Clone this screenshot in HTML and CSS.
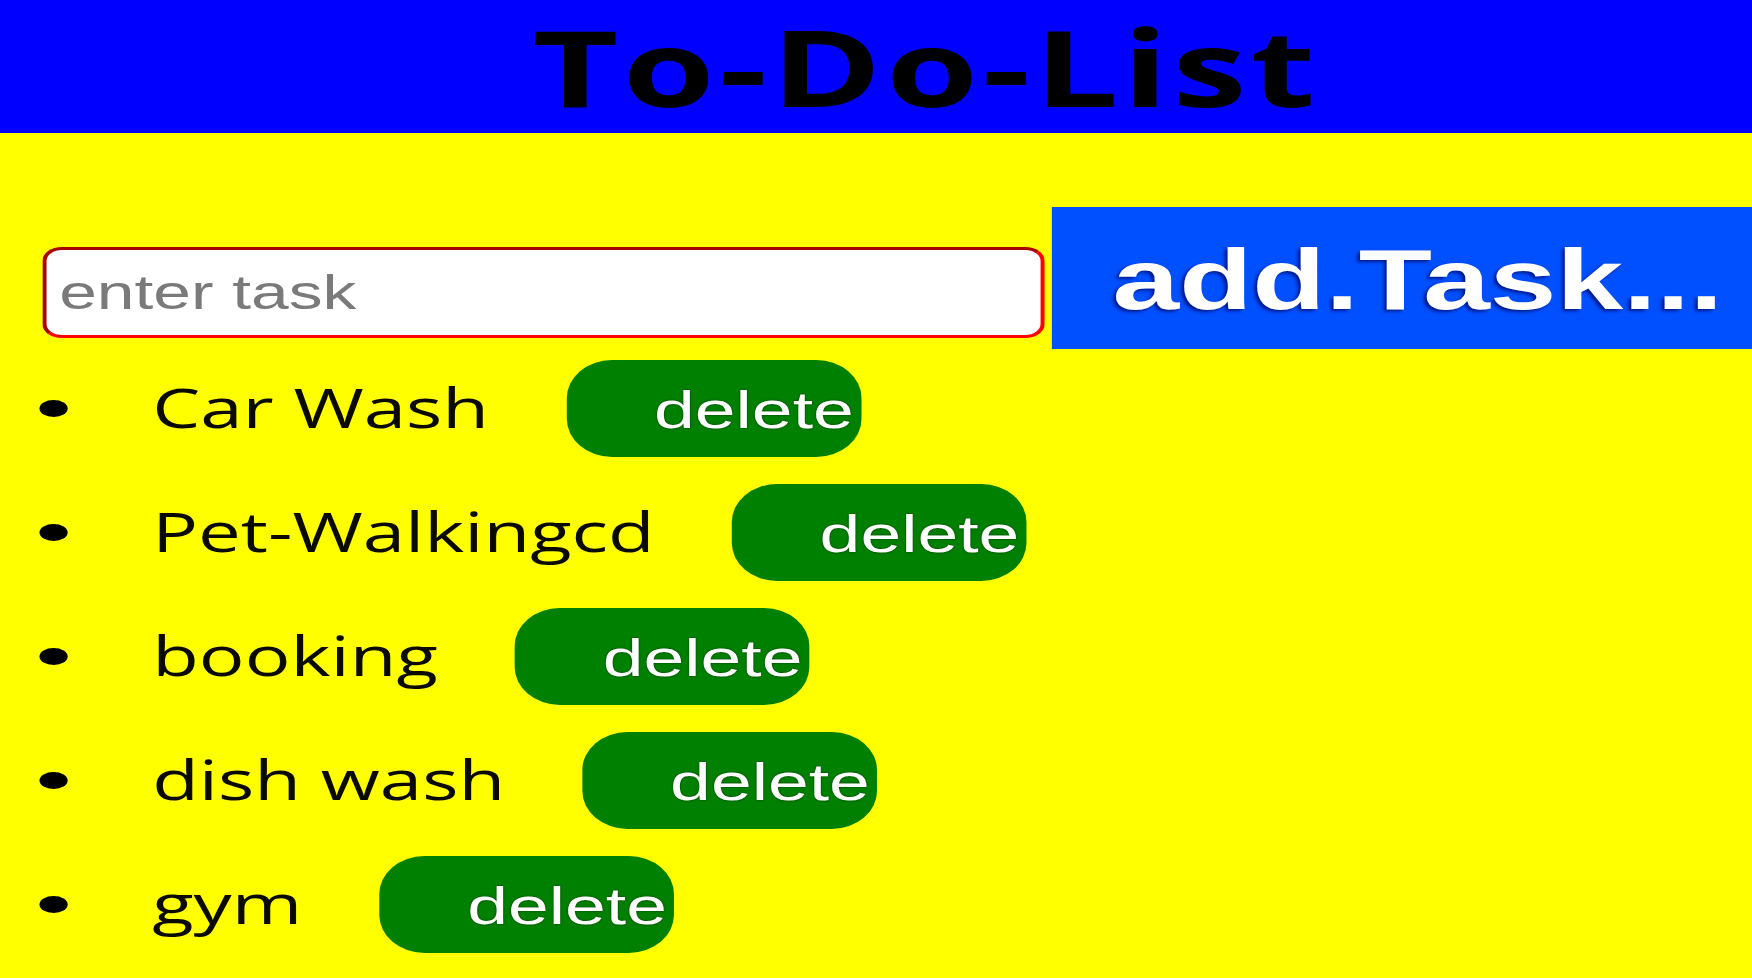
FILE: index.html
```html
<!DOCTYPE html>
<html lang="en">
<head>
<meta charset="utf-8">
<title>To-Do-List</title>
<link rel="stylesheet" href="styles.css">
</head>
<body>
<div class="app">
  <header class="header">
    <h1 class="title">To-Do-List</h1>
  </header>
  <form class="add-form" onsubmit="return false">
    <input class="task-input" type="text" placeholder="enter task">
    <button class="add-btn" type="button">add.Task...</button>
  </form>
  <ul class="task-list">
    <li class="task"><span class="task-name">Car Wash</span><button class="task-del" type="button">delete</button></li>
    <li class="task"><span class="task-name">Pet-Walkingcd</span><button class="task-del" type="button">delete</button></li>
    <li class="task"><span class="task-name">booking</span><button class="task-del" type="button">delete</button></li>
    <li class="task"><span class="task-name">dish wash</span><button class="task-del" type="button">delete</button></li>
    <li class="task"><span class="task-name">gym</span><button class="task-del" type="button">delete</button></li>
    <li class="task"><span class="task-name">laundry day</span><button class="task-del" type="button">delete</button></li>
  </ul>
</div>
</body>
</html>
```

FILE: styles.css
```css
html, body {
  margin: 0;
  padding: 0;
  height: 100%;
  overflow: hidden;
  background: #ffff00;
}

.app {
  width: 1243px;
  transform: scaleX(1.41);
  transform-origin: 0 0;
}

.header {
  background: #0000ff;
  height: 133px;
}

.title {
  margin: 0;
  padding-left: 70px;
  text-align: center;
  font-family: "Open Sans", "Noto Sans", sans-serif;
  font-weight: 700;
  font-size: 106px;
  line-height: 133px;
  letter-spacing: 2.8px;
  color: #000;
}

.add-form {
  display: flex;
  align-items: baseline;
  gap: 5px;
  margin: 74px 0 0;
  padding-left: 30px;
}

.task-input {
  box-sizing: border-box;
  flex: none;
  width: 711px;
  height: 91px;
  border: 3px inset #ff0000;
  border-radius: 14px;
  padding: 0 9px;
  font-family: "Liberation Sans", Arial, sans-serif;
  font-size: 48px;
  background: #fff;
  outline: none;
}

.task-input::placeholder {
  color: #7a7a7a;
}

.add-btn {
  flex: none;
  background: #0050ff;
  color: #fff;
  border: 0;
  border-radius: 0;
  padding: 25px 60px 21px 43px;
  font-family: "Liberation Sans", Arial, sans-serif;
  font-weight: 700;
  font-size: 85px;
  line-height: 96px;
  text-shadow: -2px 2px 3px #001a8c;
}

.task-list {
  list-style: none;
  margin: 11px 0 0;
  padding: 0;
}

.task {
  margin-bottom: 27px;
  font-family: "Open Sans", "Noto Sans", sans-serif;
  font-size: 54px;
  color: #0a0a00;
  white-space: nowrap;
}

.task::before {
  content: "";
  display: inline-block;
  width: 20px;
  height: 17px;
  border-radius: 50%;
  background: #000;
  margin-left: 28px;
  margin-right: 60px;
  vertical-align: 11px;
}

.task-del {
  margin-left: 55px;
  background: #008000;
  color: #fff;
  border: 0;
  border-radius: 32px / 38px;
  padding: 21px 5px 17px 62px;
  font-family: "Liberation Sans", Arial, sans-serif;
  font-size: 52px;
  line-height: 59px;
  vertical-align: baseline;
  text-shadow: 0 0 2px #003300;
}
```
